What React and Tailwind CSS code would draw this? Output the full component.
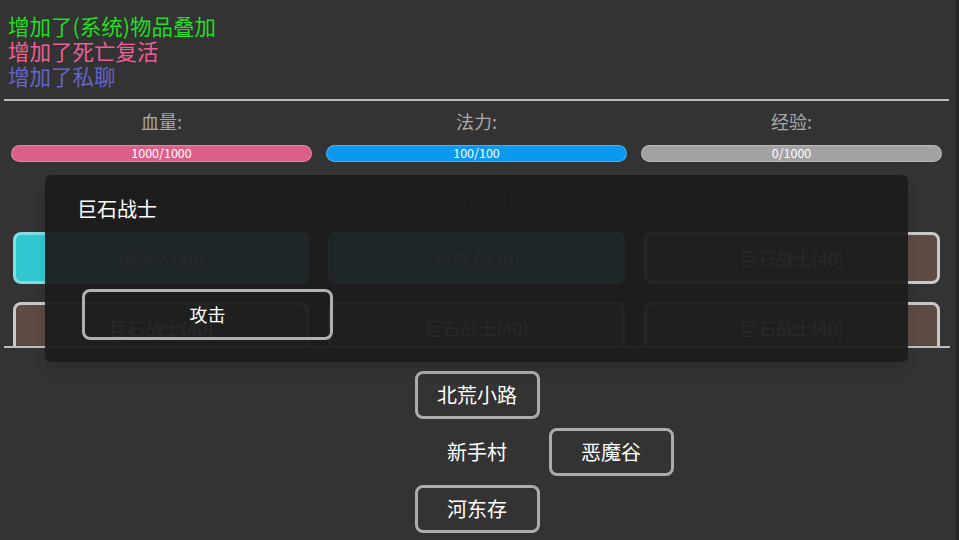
import React from "react";

const font = { fontFamily: '"Noto Sans CJK SC", "Noto Sans", sans-serif' };

const messages = [
    { text: "增加了(系统)物品叠加", color: "text-[#22dd22]" },
    { text: "增加了死亡复活", color: "text-[#ee5f98]" },
    { text: "增加了私聊", color: "text-[#6565c8]" },
];

const stats = [
    { label: "血量:", value: "1000/1000", bar: "bg-[#dc5f88]" },
    { label: "法力:", value: "100/100", bar: "bg-[#0b99ef]" },
    { label: "经验:", value: "0/1000", bar: "bg-[#a2a2a2]" },
];

const monsters = [
    { name: "稻草人(10)", style: "bg-[#2fc8d1] border-[#7fdde3]" },
    { name: "稻草人(10)", style: "bg-[#2fc8d1] border-[#7fdde3]" },
    { name: "巨石战士(40)", style: "bg-[#5c4a43] border-[#c8c8c8]" },
    { name: "巨石战士(40)", style: "bg-[#5c4a43] border-[#c8c8c8]" },
    { name: "巨石战士(40)", style: "bg-[#5c4a43] border-[#c8c8c8]" },
    { name: "巨石战士(40)", style: "bg-[#5c4a43] border-[#c8c8c8]" },
];

const NavButton = ({ children }) => (
    <button className="h-[48px] w-[125px] rounded-[8px] border-[3px] border-[#acacac] bg-[#333333] text-[20px] text-white">
        {children}
    </button>
);

export default function App() {
    return (
        <div className="relative h-[540px] w-[959px] overflow-hidden border-r-[3px] border-[#262626] bg-[#333333]" style={font}>
            {/* 系统消息 */}
            <div className="pl-[8px] pt-[13px] text-[21.5px] leading-[25px]">
                {messages.map((m) => (
                    <div key={m.text} className={m.color}>{m.text}</div>
                ))}
            </div>

            <div className="mx-[4px] mt-[11px] h-[2px] w-[945px] bg-[#bdbdbd]" />

            {/* 属性 */}
            <div className="ml-[4px] mt-[8px] grid w-[945px] grid-cols-3">
                {stats.map((s) => (
                    <div key={s.label} className="flex flex-col items-center px-[7px]">
                        <div className="text-[18px] leading-[24px] text-[#a8a8a8]">{s.label}</div>
                        <div className={`mt-[12px] flex h-[17px] w-full items-center justify-center rounded-full border border-white/25 text-[12.5px] leading-none text-white ${s.bar}`}>
                            {s.value}
                        </div>
                    </div>
                ))}
            </div>

            {/* 地图怪物 */}
            <div className="mt-[23px] text-center text-[20px] leading-[28px] text-[#b03a3a]">新手村</div>
            <div className="ml-[4px] mt-[19px] h-[116px] w-[946px] overflow-hidden border-b-2 border-[#bdbdbd]">
                <div className="grid grid-cols-3 gap-y-[18px]">
                    {monsters.map((m, i) => (
                        <div key={i} className="pl-[9px] pr-[10px]">
                            <div className={`flex h-[52px] items-center justify-center rounded-[8px] border-[3px] text-[18px] text-white ${m.style}`}>
                                {m.name}
                            </div>
                        </div>
                    ))}
                </div>
            </div>

            {/* 方向 */}
            <div className="mt-[23px] grid grid-cols-[125px_125px_125px] justify-center gap-[9px] pr-[2px]">
                <div />
                <NavButton>北荒小路</NavButton>
                <div />
                <div />
                <div className="flex items-center justify-center text-[20px] text-white">新手村</div>
                <NavButton>恶魔谷</NavButton>
                <div />
                <NavButton>河东存</NavButton>
                <div />
            </div>

            {/* 对话框 */}
            <div className="absolute left-[45px] top-[175px] h-[187px] w-[863px] rounded-[6px] bg-[#1c1c1e]/95 shadow-lg">
                <div className="pl-[32px] pt-[20px] text-[20px] leading-[28px] text-white">巨石战士</div>
                <button className="ml-[37px] mt-[66px] h-[51px] w-[251px] rounded-[8px] border-[3px] border-[#b0b0b0] text-[18px] text-white">
                    攻击
                </button>
            </div>
        </div>
    );
}
